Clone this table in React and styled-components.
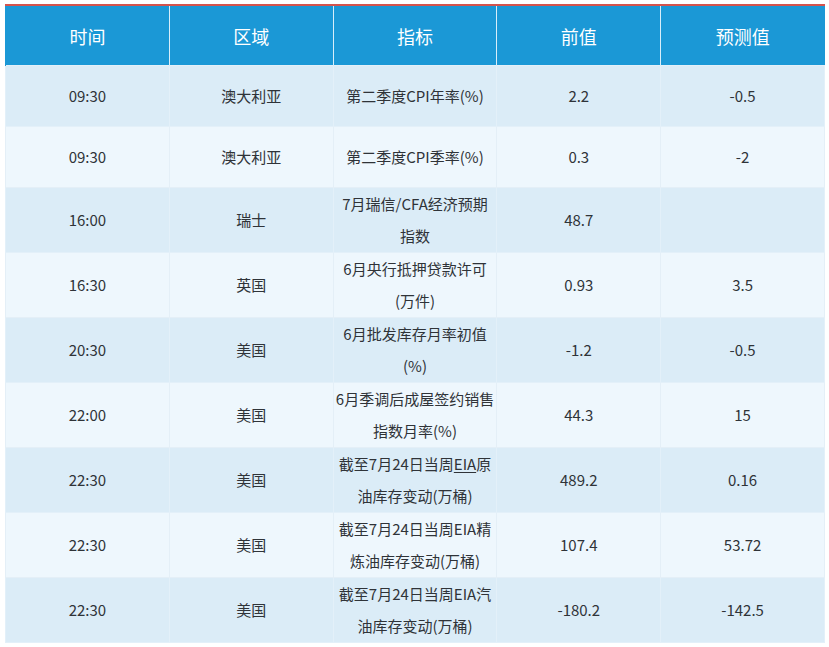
import React from "react";
import styled, { createGlobalStyle } from "styled-components";

const GlobalStyle = createGlobalStyle`
    body {
        margin: 0;
        background-color: #ffffff;
        font-family: "Noto Sans CJK SC", "Noto Sans", sans-serif;
    }
`;

const Wrapper = styled.div`
    padding: 4px 0 0 5px;
`;

const Table = styled.table`
    width: 820px;
    border-collapse: collapse;
    table-layout: fixed;
    border-top: 2px solid #d4534d;
`;

const HeadCell = styled.th`
    height: 59px;
    padding: 0;
    background-color: #1b98d6;
    color: #ffffff;
    font-size: 18px;
    font-weight: 400;
    text-align: center;
    border-left: 1px solid #d8eefa;
    &:first-child {
        border-left: 1px solid #1b98d6;
    }
`;

const Row = styled.tr`
    background-color: ${props => props.$odd ? "#dbecf7" : "#eef7fd"};
`;

const Cell = styled.td`
    height: 60px;
    padding: 0 2px;
    border: 1px solid ${props => props.$odd ? "#e3f0f9" : "#e4eff7"};
    color: #2f3338;
    font-size: 15px;
    line-height: 32px;
    text-align: center;
    vertical-align: middle;
    word-break: break-all;
`;

const Link = styled.span`
    text-decoration: underline;
    text-underline-offset: 2px;
`;

const rows = [
    { time: "09:30", area: "澳大利亚", name: "第二季度CPI年率(%)", prev: "2.2", forecast: "-0.5" },
    { time: "09:30", area: "澳大利亚", name: "第二季度CPI季率(%)", prev: "0.3", forecast: "-2" },
    { time: "16:00", area: "瑞士", name: "7月瑞信/CFA经济预期指数", prev: "48.7", forecast: "" },
    { time: "16:30", area: "英国", name: "6月央行抵押贷款许可(万件)", prev: "0.93", forecast: "3.5" },
    { time: "20:30", area: "美国", name: "6月批发库存月率初值(%)", prev: "-1.2", forecast: "-0.5" },
    { time: "22:00", area: "美国", name: "6月季调后成屋签约销售指数月率(%)", prev: "44.3", forecast: "15" },
    { time: "22:30", area: "美国", name: <>截至7月24日当周<Link>EIA</Link>原油库存变动(万桶)</>, prev: "489.2", forecast: "0.16" },
    { time: "22:30", area: "美国", name: "截至7月24日当周EIA精炼油库存变动(万桶)", prev: "107.4", forecast: "53.72" },
    { time: "22:30", area: "美国", name: "截至7月24日当周EIA汽油库存变动(万桶)", prev: "-180.2", forecast: "-142.5" }
];

function App() {
    return (
        <Wrapper>
            <GlobalStyle />
            <Table>
                <thead>
                    <tr>
                        <HeadCell>时间</HeadCell>
                        <HeadCell>区域</HeadCell>
                        <HeadCell>指标</HeadCell>
                        <HeadCell>前值</HeadCell>
                        <HeadCell>预测值</HeadCell>
                    </tr>
                </thead>
                <tbody>
                    {rows.map((row, index) => {
                        const odd = index % 2 === 0;
                        return (
                            <Row key={index} $odd={odd}>
                                <Cell $odd={odd}>{row.time}</Cell>
                                <Cell $odd={odd}>{row.area}</Cell>
                                <Cell $odd={odd}>{row.name}</Cell>
                                <Cell $odd={odd}>{row.prev}</Cell>
                                <Cell $odd={odd}>{row.forecast}</Cell>
                            </Row>
                        );
                    })}
                </tbody>
            </Table>
        </Wrapper>
    );
};

export default App;
